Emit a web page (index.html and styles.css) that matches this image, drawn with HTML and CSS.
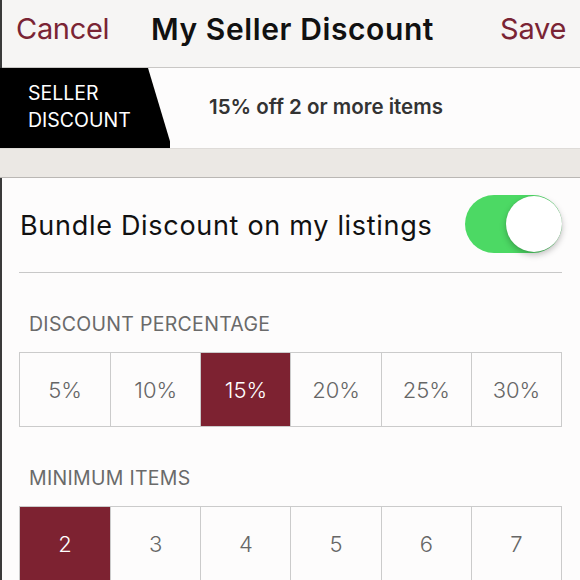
FILE: index.html
```html
<!DOCTYPE html>
<html>
<head>
<meta charset="utf-8">
<link rel="stylesheet" href="styles.css">
</head>
<body>
<div class="page">
  <header class="nav">
    <span class="nav-btn">Cancel</span>
    <span class="nav-title">My Seller Discount</span>
    <span class="nav-btn right">Save</span>
  </header>
  <div class="banner">
    <div class="tag"><span>SELLER<br>DISCOUNT</span></div>
    <div class="banner-text">15% off 2 or more items</div>
  </div>
  <div class="strip"></div>
  <main class="content">
    <div class="toggle-row">
      <span class="toggle-label">Bundle Discount on my listings</span>
      <span class="switch"><span class="knob"></span></span>
    </div>
    <div class="section-label">DISCOUNT PERCENTAGE</div>
    <div class="seg">
      <div class="cell">5%</div>
      <div class="cell">10%</div>
      <div class="cell on">15%</div>
      <div class="cell">20%</div>
      <div class="cell">25%</div>
      <div class="cell">30%</div>
    </div>
    <div class="section-label">MINIMUM ITEMS</div>
    <div class="seg">
      <div class="cell on">2</div>
      <div class="cell">3</div>
      <div class="cell">4</div>
      <div class="cell">5</div>
      <div class="cell">6</div>
      <div class="cell">7</div>
    </div>
  </main>
</div>
</body>
</html>
```

FILE: styles.css
```css
html, body {
  margin: 0;
  padding: 0;
  background: #fdfcfc;
}
body {
  font-family: Inter, "Liberation Sans", sans-serif;
  width: 580px;
  height: 580px;
  overflow: hidden;
}
.page {
  border-left: 2px solid #3a3a3a;
  min-height: 580px;
  box-sizing: border-box;
}
.nav {
  height: 68px;
  box-sizing: border-box;
  background: #f6f5f4;
  border-bottom: 1px solid #c9c7c5;
  display: grid;
  grid-template-columns: 1fr auto 1fr;
  align-items: center;
  padding: 0 14px 10px 14px;
}
.nav-btn {
  color: #7a2434;
  font-size: 29px;
  letter-spacing: -0.3px;
}
.nav-btn.right {
  justify-self: end;
}
.nav-title {
  color: #111;
  font-size: 30px;
  font-weight: 600;
  letter-spacing: 0.6px;
  margin-left: 3px;
}
.banner {
  height: 80px;
  display: flex;
  align-items: center;
  background: #fdfcfc;
}
.tag {
  height: 100%;
  width: 170px;
  margin-left: -2px;
  background: #000;
  clip-path: polygon(0 0, 148px 0, 172px 100%, 0 100%);
  display: flex;
  align-items: center;
  color: #fff;
  font-size: 19.5px;
  line-height: 27px;
  padding-left: 28px;
  padding-bottom: 2px;
  box-sizing: border-box;
}
.banner-text {
  margin-left: 39px;
  font-size: 20.5px;
  font-weight: 600;
  color: #333;
  margin-bottom: 3px;
}
.strip {
  height: 28px;
  margin-left: -2px;
  background: #ebe8e4;
  border-top: 1px solid #dedbd8;
  border-bottom: 1px solid #bab7b4;
}
.content {
  padding: 0 18px 0 17px;
}
.toggle-row {
  height: 94px;
  border-bottom: 1px solid #c8c8c8;
  display: flex;
  align-items: center;
  justify-content: space-between;
}
.toggle-label {
  font-size: 27px;
  color: #111;
  margin-left: 1px;
  letter-spacing: 0.7px;
}
.switch {
  width: 97px;
  height: 58px;
  border-radius: 29px;
  background: #4cd964;
  position: relative;
  margin-top: -2px;
}
.knob {
  position: absolute;
  right: 0;
  top: 1px;
  width: 56px;
  height: 56px;
  border-radius: 50%;
  background: #fff;
  box-shadow: 0 3px 6px rgba(0,0,0,0.25), 0 0 1px rgba(0,0,0,0.2);
}
.section-label {
  color: #6a6a6a;
  font-size: 19.5px;
  letter-spacing: 0.3px;
  padding: 39px 0 0 10px;
  height: 40px;
}
.seg {
  display: grid;
  grid-template-columns: repeat(6, 1fr);
  border: 1.5px solid #cbcbcb;
  height: 75px;
  box-sizing: border-box;
}
.cell {
  display: flex;
  align-items: center;
  justify-content: center;
  font-size: 22px;
  font-weight: 300;
  color: #666;
  border-left: 1.5px solid #cbcbcb;
}
.cell:first-child {
  border-left: none;
}
.cell.on {
  background: #7d2231;
  color: #fff;
}
```
